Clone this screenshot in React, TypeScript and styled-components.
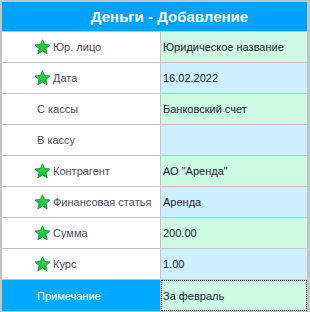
import React from "react";
import styled, { createGlobalStyle } from "styled-components";

const Global = createGlobalStyle`
  html, body { margin: 0; padding: 0; background: #ffffff; }
  body { font-family: "Liberation Sans", Arial, sans-serif; }
`;

const Frame = styled.div`
  width: 310px;
  height: 312px;
  box-sizing: border-box;
  border-style: solid;
  border-color: #c4c4c4;
  border-width: 2px 3px 1px 2px;
  display: flex;
  flex-direction: column;
  background: #fff;
`;

const Header = styled.div`
  height: 29px;
  background: #00a2ff;
  border-bottom: 1px solid #c4c4c4;
  display: flex;
  align-items: center;
  justify-content: center;
  padding-left: 30px;
  color: #ffffff;
  font-weight: bold;
  font-size: 15px;
  font-family: "Liberation Sans", Arial, sans-serif;
`;

const Row = styled.div<{ $last?: boolean }>`
  display: grid;
  grid-template-columns: 158px 1px 1fr;
  height: ${(p) => (p.$last ? 31 : 30)}px;
  border-bottom: ${(p) => (p.$last ? "none" : "1px solid #c4c4c4")};
`;

const Divider = styled.div`
  background: #c4c4c4;
`;

const Label = styled.div<{ $active?: boolean; $star?: boolean }>`
  display: flex;
  align-items: center;
  gap: 2px;
  padding-left: ${(p) => (p.$star ? 32 : 35)}px;
  background: ${(p) => (p.$active ? "#00a8ff" : "#ffffff")};
  color: ${(p) => (p.$active ? "#ffffff" : "#4d4d5c")};
  font-size: 11px;
  white-space: nowrap;
`;

const Value = styled.div<{ $tone: "green" | "blue"; $focus?: boolean }>`
  display: flex;
  align-items: center;
  padding-left: 2px;
  background: ${(p) => (p.$tone === "green" ? "#ccfae2" : "#ccf0ff")};
  color: #25253a;
  font-size: 11px;
  outline: ${(p) => (p.$focus ? "1px dotted #000" : "none")};
  outline-offset: -1px;
`;

const Star = () => (
  <svg width="17" height="16" viewBox="0 0 17 16">
    <defs>
      <linearGradient id="sg" x1="0" y1="0" x2="0" y2="1">
        <stop offset="0" stopColor="#3ee05a" />
        <stop offset="1" stopColor="#0fb533" />
      </linearGradient>
    </defs>
    <polygon
      points="8.5,0.8 10.6,5.6 15.9,6.0 11.9,9.5 13.1,14.8 8.5,12.0 3.9,14.8 5.1,9.5 1.1,6.0 6.4,5.6"
      fill="url(#sg)"
      stroke="#119a35"
      strokeWidth="1"
      strokeLinejoin="round"
    />
  </svg>
);

type Item = { label: string; value: string; star: boolean };

const items: Item[] = [
  { label: "Юр. лицо", value: "Юридическое название", star: true },
  { label: "Дата", value: "16.02.2022", star: true },
  { label: "С кассы", value: "Банковский счет", star: false },
  { label: "В кассу", value: "", star: false },
  { label: "Контрагент", value: 'АО "Аренда"', star: true },
  { label: "Финансовая статья", value: "Аренда", star: true },
  { label: "Сумма", value: "200.00", star: true },
  { label: "Курс", value: "1.00", star: true },
  { label: "Примечание", value: "За февраль", star: false },
];

export default function App() {
  return (
    <>
      <Global />
      <Frame>
        <Header>Деньги - Добавление</Header>
        {items.map((it, i) => {
          const last = i === items.length - 1;
          return (
            <Row key={it.label} $last={last}>
              <Label $active={last} $star={it.star}>
                {it.star && <Star />}
                <span>{it.label}</span>
              </Label>
              <Divider />
              <Value $tone={i % 2 === 0 ? "green" : "blue"} $focus={last}>
                {it.value}
              </Value>
            </Row>
          );
        })}
      </Frame>
    </>
  );
}
